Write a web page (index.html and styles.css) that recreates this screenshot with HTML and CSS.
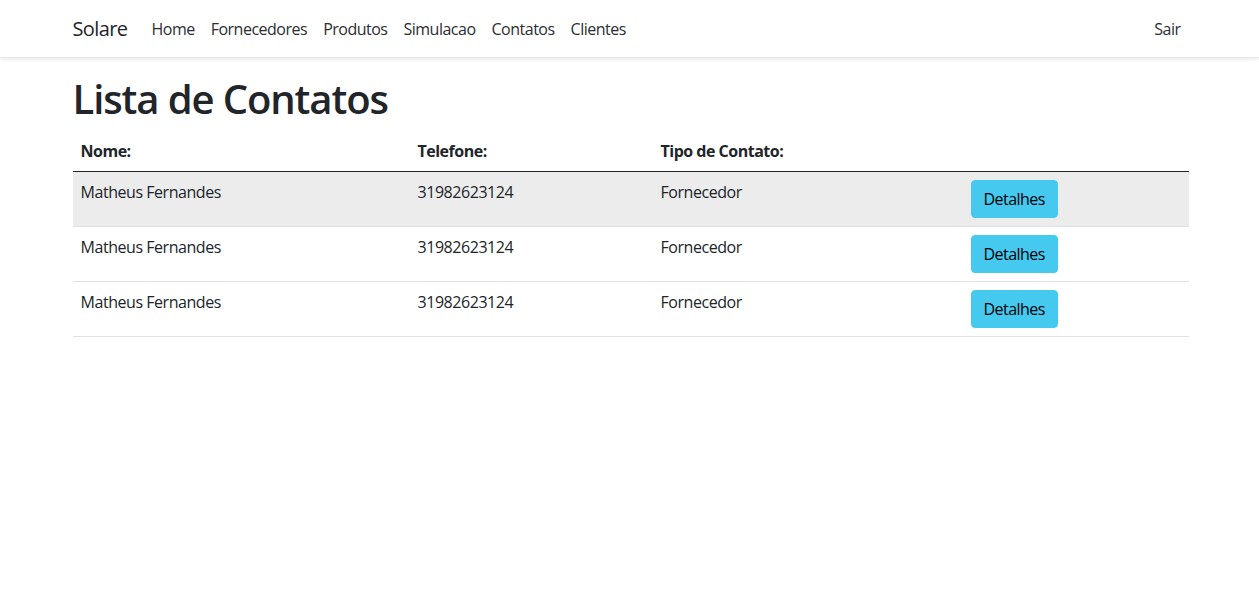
FILE: index.html
```html
<!DOCTYPE html>
<html lang="pt-BR">
<head>
<meta charset="utf-8">
<title>Lista de Contatos</title>
<link rel="stylesheet" href="styles.css">
</head>
<body>
<nav class="navbar">
  <div class="container nav-inner">
    <a class="brand" href="#">Solare</a>
    <ul class="nav-links">
      <li><a href="#">Home</a></li>
      <li><a href="#">Fornecedores</a></li>
      <li><a href="#">Produtos</a></li>
      <li><a href="#">Simulacao</a></li>
      <li><a href="#">Contatos</a></li>
      <li><a href="#">Clientes</a></li>
    </ul>
    <a class="nav-exit" href="#">Sair</a>
  </div>
</nav>
<main class="container">
  <h1 class="title">Lista de Contatos</h1>
  <table class="table">
    <thead>
      <tr>
        <th class="col-name">Nome:</th>
        <th class="col-phone">Telefone:</th>
        <th class="col-type">Tipo de Contato:</th>
        <th class="col-action"></th>
      </tr>
    </thead>
    <tbody>
      <tr class="active">
        <td>Matheus Fernandes</td>
        <td>31982623124</td>
        <td>Fornecedor</td>
        <td><button class="btn-info">Detalhes</button></td>
      </tr>
      <tr>
        <td>Matheus Fernandes</td>
        <td>31982623124</td>
        <td>Fornecedor</td>
        <td><button class="btn-info">Detalhes</button></td>
      </tr>
      <tr>
        <td>Matheus Fernandes</td>
        <td>31982623124</td>
        <td>Fornecedor</td>
        <td><button class="btn-info">Detalhes</button></td>
      </tr>
    </tbody>
  </table>
</main>
</body>
</html>
```
FILE: styles.css
```css
* { box-sizing: border-box; }
body {
  margin: 0;
  font-family: "Open Sans", "Noto Sans", sans-serif;
  font-size: 16px;
  line-height: 1.5;
  color: #212529;
  background: #fff;
}
.container {
  width: 1140px;
  margin: 0 auto;
  padding: 0 11px 0 13px;
}
.navbar {
  background: #fff;
  height: 58px;
  box-shadow: 0 1px 4px rgba(0,0,0,0.10);
  border-bottom: 1px solid #e8e8e8;
}
.nav-inner {
  display: flex;
  align-items: center;
  height: 100%;
}
.brand {
  font-size: 20px;
  color: #212529;
  text-decoration: none;
  margin-right: 16px;
  letter-spacing: -0.6px;
}
.nav-links {
  display: flex;
  list-style: none;
  margin: 0;
  padding: 0;
}
.nav-links a, .nav-exit {
  display: block;
  padding: 8px;
  color: #2b2e32;
  text-decoration: none;
  font-size: 16px;
  letter-spacing: -0.5px;
}
.nav-exit { margin-left: auto; }
.title {
  font-size: 40px;
  font-weight: 600;
  line-height: 48px;
  margin: 17px 0 8px;
  letter-spacing: -1.1px;
}
.table {
  width: 100%;
  border-collapse: collapse;
}
.table th, .table td {
  text-align: left;
  padding: 8px;
  vertical-align: top;
  letter-spacing: -0.45px;
}
.table th {
  font-weight: 700;
  border-bottom: 1px solid #212529;
  letter-spacing: -0.5px;
}
.table td { border-bottom: 1px solid #dee2e6; }
.col-name { width: 337px; }
.col-phone { width: 243px; }
.col-type { width: 310px; }
.col-action { width: 226px; }
.table tr.active td { background: #ececec; }
.btn-info {
  font-family: inherit;
  font-size: 16px;
  line-height: 24px;
  padding: 6px 12px;
  background: #45c9ef;
  border: 1px solid #45c9ef;
  border-radius: 4px;
  color: #000;
  letter-spacing: -0.55px;
  cursor: pointer;
}
```
